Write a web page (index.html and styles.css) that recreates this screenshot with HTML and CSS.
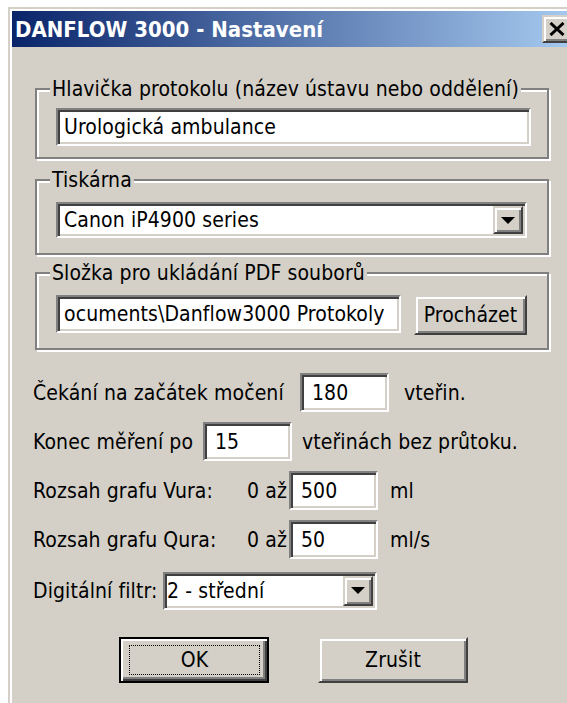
FILE: index.html
```html
<!DOCTYPE html>
<html lang="cs">
<head>
<meta charset="utf-8">
<title>DANFLOW 3000 - Nastavení</title>
<link rel="stylesheet" href="styles.css">
</head>
<body>
<div class="window">
  <div class="titlebar">
    <span class="title">DANFLOW 3000 - Nastavení</span>
    <span class="close">
      <svg width="16" height="14" viewBox="0 0 16 14"><path d="M1.5 1 L14.5 13 M14.5 1 L1.5 13" stroke="#000" stroke-width="3"/></svg>
    </span>
  </div>

  <div class="client">
    <fieldset class="group g-header">
      <legend>Hlavička protokolu (název ústavu nebo oddělení)</legend>
      <div class="group-body">
        <div class="edit edit-header">Urologická ambulance</div>
      </div>
    </fieldset>

    <fieldset class="group g-printer">
      <legend>Tiskárna</legend>
      <div class="group-body">
        <div class="combo combo-printer">
          <span class="combo-text">Canon iP4900 series</span>
          <span class="drop"><svg width="14" height="7" viewBox="0 0 14 7"><path d="M0 0 H14 L7 7 Z" fill="#000"/></svg></span>
        </div>
      </div>
    </fieldset>

    <fieldset class="group g-folder">
      <legend>Složka pro ukládání PDF souborů</legend>
      <div class="group-body folder-row">
        <div class="edit edit-folder">ocuments\Danflow3000 Protokoly</div>
        <span class="btn btn-browse">Procházet</span>
      </div>
    </fieldset>

    <div class="rows">
      <div class="row">
        <span class="lbl lbl-wait">Čekání na začátek močení</span>
        <div class="edit num">180</div>
        <span class="unit unit-wide">vteřin.</span>
      </div>
      <div class="row">
        <span class="lbl lbl-end">Konec měření po</span>
        <div class="edit num">15</div>
        <span class="unit">vteřinách bez průtoku.</span>
      </div>
      <div class="row">
        <span class="lbl lbl-range">Rozsah grafu Vura:</span>
        <span class="lbl lbl-from">0 až</span>
        <div class="edit num">500</div>
        <span class="unit unit-mid">ml</span>
      </div>
      <div class="row">
        <span class="lbl lbl-range">Rozsah grafu Qura:</span>
        <span class="lbl lbl-from">0 až</span>
        <div class="edit num">50</div>
        <span class="unit unit-mid">ml/s</span>
      </div>
      <div class="row row-filter">
        <span class="lbl lbl-filter">Digitální filtr:</span>
        <div class="combo combo-filter">
          <span class="combo-text">2 - střední</span>
          <span class="drop"><svg width="14" height="7" viewBox="0 0 14 7"><path d="M0 0 H14 L7 7 Z" fill="#000"/></svg></span>
        </div>
      </div>
    </div>

    <div class="buttons">
      <span class="btn btn-default"><span class="focus">OK</span></span>
      <span class="btn">Zrušit</span>
    </div>
  </div>
</div>
</body>
</html>
```

FILE: styles.css
```css
* {
  box-sizing: border-box;
}

html,
body {
  margin: 0;
  padding: 0;
  background: #fff;
  overflow: hidden;
}

body {
  font-family: "DejaVu Sans Condensed", "DejaVu Sans", sans-serif;
  font-size: 21px;
  letter-spacing: 0.1px;
  color: #000;
}

/* window frame */
.window {
  margin: 7px 0 0 8px;
  width: 570px;
  height: 720px;
  padding: 2px;
  background: #d4d0c8;
  border: 2px solid #d4d0c8;
  box-shadow: inset 2px 2px 0 #fff;
}

.titlebar {
  height: 36px;
  display: flex;
  align-items: center;
  justify-content: space-between;
  padding: 0 2px 0 3px;
  background: linear-gradient(to right, #0a246a, #a6caf0);
}

.title {
  color: #fff;
  font-weight: bold;
  font-size: 22px;
  letter-spacing: 0;
}

.close {
  width: 30px;
  height: 28px;
  display: flex;
  align-items: center;
  justify-content: center;
  background: #d4d0c8;
  border: 2px solid;
  border-color: #d4d0c8 #404040 #404040 #d4d0c8;
  box-shadow: inset 2px 2px 0 #fff, inset -2px -2px 0 #808080;
}

/* dialog client area */
.client {
  display: flex;
  flex-direction: column;
  padding: 0 0 0 23px;
}

.group {
  margin: 0;
  width: 514px;
  min-width: 0;
  border: 2px solid #808080;
  box-shadow: inset 2px 2px 0 #fff, 2px 2px 0 #fff;
  padding: 0 0 0 13px;
}

.group legend {
  padding: 0 2px;
  line-height: 24px;
  background: #d4d0c8;
}

.group-body {
  padding-left: 6px;
}

.g-header {
  margin-top: 30px;
  padding-top: 7px;
  padding-bottom: 11px;
}

.g-printer {
  margin-top: 9px;
  padding-top: 10px;
  padding-bottom: 15px;
}

.g-folder {
  margin-top: 6px;
  padding-top: 10px;
  padding-bottom: 13px;
}

/* sunken edit field */
.edit {
  display: flex;
  align-items: center;
  background: #fff;
  border: 2px solid;
  border-color: #808080 #fff #fff #808080;
  box-shadow: inset 2px 2px 0 #404040, inset -2px -2px 0 #d4d0c8;
  padding: 0 6px;
  white-space: nowrap;
  overflow: hidden;
}

.edit-header {
  width: 475px;
  height: 38px;
}

.folder-row {
  display: flex;
  align-items: flex-start;
  gap: 13px;
}

.edit-folder {
  width: 345px;
  height: 38px;
}

/* raised push button */
.btn {
  display: flex;
  align-items: center;
  justify-content: center;
  background: #d4d0c8;
  border: 2px solid;
  border-color: #d4d0c8 #404040 #404040 #d4d0c8;
  box-shadow: inset 2px 2px 0 #fff, inset -2px -2px 0 #808080;
}

.btn-browse {
  width: 113px;
  height: 40px;
}

/* combo box */
.combo {
  display: flex;
  align-items: stretch;
  background: #fff;
  border: 2px solid;
  border-color: #808080 #fff #fff #808080;
  box-shadow: inset 2px 2px 0 #404040, inset -2px -2px 0 #d4d0c8;
  padding: 2px;
}

.combo-text {
  flex: 1;
  display: flex;
  align-items: center;
  padding-left: 4px;
  white-space: nowrap;
}

.drop {
  width: 30px;
  display: flex;
  align-items: center;
  justify-content: center;
  background: #d4d0c8;
  border: 2px solid;
  border-color: #d4d0c8 #404040 #404040 #d4d0c8;
  box-shadow: inset 2px 2px 0 #fff, inset -2px -2px 0 #808080;
}

.combo-printer {
  width: 471px;
  height: 36px;
}

.combo-filter {
  width: 214px;
  height: 38px;
}

.combo-filter .combo-text {
  padding-left: 0;
}

/* labelled rows */
.rows {
  display: flex;
  flex-direction: column;
  gap: 10px;
  margin-top: 23px;
  margin-left: -2px;
}

.row {
  display: flex;
  align-items: center;
  height: 39px;
}

.lbl {
  white-space: nowrap;
}

.lbl-wait {
  width: 267px;
}

.lbl-end {
  width: 170px;
}

.lbl-range {
  width: 214px;
}

.lbl-from {
  width: 42px;
}

.lbl-filter {
  width: 130px;
}

.edit.num {
  width: 89px;
  height: 39px;
  padding-left: 10px;
}

.unit {
  margin-left: 10px;
  white-space: nowrap;
}

.unit-wide {
  margin-left: 15px;
}

.unit-mid {
  margin-left: 12px;
}

.row-filter {
  margin-top: 2px;
}

/* dialog buttons */
.buttons {
  display: flex;
  gap: 49px;
  margin-top: 27px;
  padding-left: 84px;
}

.buttons .btn {
  width: 150px;
  height: 46px;
}

.btn-default {
  border-color: #000;
  box-shadow: inset 2px 2px 0 #fff, inset -2px -2px 0 #404040, inset -4px -4px 0 #808080;
  padding: 6px 7px 6px 8px;
}

.focus {
  flex: 1;
  align-self: stretch;
  display: flex;
  align-items: center;
  justify-content: center;
  border: 1px dotted #000;
}
```
